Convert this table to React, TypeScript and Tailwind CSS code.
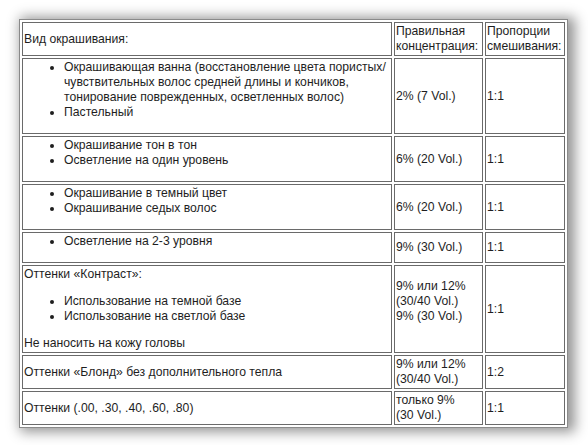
const cell = 'border border-[#6a6a6a] p-px align-middle'

function Bullets({ items, className = 'mt-0 mb-3' }: { items: React.ReactNode[]; className?: string }) {
  return (
    <ul className={`list-disc pl-10 ${className}`}>
      {items.map((item, i) => (
        <li key={i}>{item}</li>
      ))}
    </ul>
  )
}

export default function App() {
  return (
    <div className="min-h-screen bg-white pl-[19px] pt-[19px] font-['Liberation_Sans',Arial,sans-serif] text-[12.2px] leading-[15px] text-[#1e1e1e]">
      <table className="w-[549px] table-fixed border-separate border-spacing-[2px] border border-[#8a8a8a] bg-white shadow-[4px_1px_12px_3px_rgba(0,0,0,0.42)]">
        <tbody>
          <tr>
            <td className={`${cell} w-[370px]`}>Вид окрашивания:</td>
            <td className={`${cell} w-[89px]`}>Правильная концентрация:</td>
            <td className={`${cell} w-[80px]`}>Пропорции смешивания:</td>
          </tr>
          <tr>
            <td className={cell}>
              <Bullets
                items={[
                  <>
                    Окрашивающая ванна (восстановление цвета пористых/
                    <br />
                    чувствительных волос средней длины и кончиков,
                    <br />
                    тонирование поврежденных, осветленных волос)
                  </>,
                  'Пастельный',
                ]}
              />
            </td>
            <td className={cell}>2% (7 Vol.)</td>
            <td className={cell}>1:1</td>
          </tr>
          <tr>
            <td className={cell}>
              <Bullets items={['Окрашивание тон в тон', 'Осветление на один уровень']} />
            </td>
            <td className={cell}>6% (20 Vol.)</td>
            <td className={cell}>1:1</td>
          </tr>
          <tr>
            <td className={cell}>
              <Bullets items={['Окрашивание в темный цвет', 'Окрашивание седых волос']} />
            </td>
            <td className={cell}>6% (20 Vol.)</td>
            <td className={cell}>1:1</td>
          </tr>
          <tr>
            <td className={cell}>
              <Bullets items={['Осветление на 2-3 уровня']} />
            </td>
            <td className={cell}>9% (30 Vol.)</td>
            <td className={cell}>1:1</td>
          </tr>
          <tr>
            <td className={cell}>
              Оттенки «Контраст»:
              <Bullets
                className="my-3"
                items={['Использование на темной базе', 'Использование на светлой базе']}
              />
              Не наносить на кожу головы
            </td>
            <td className={cell}>
              9% или 12%
              <br />
              (30/40 Vol.)
              <br />
              9% (30 Vol.)
              <br />
              &nbsp;
            </td>
            <td className={cell}>1:1</td>
          </tr>
          <tr>
            <td className={cell}>Оттенки «Блонд» без дополнительного тепла</td>
            <td className={cell}>
              9% или 12%
              <br />
              (30/40 Vol.)
            </td>
            <td className={cell}>1:2</td>
          </tr>
          <tr>
            <td className={cell}>Оттенки (.00, .30, .40, .60, .80)</td>
            <td className={cell}>
              только 9%
              <br />
              (30 Vol.)
            </td>
            <td className={cell}>1:1</td>
          </tr>
        </tbody>
      </table>
    </div>
  )
}
